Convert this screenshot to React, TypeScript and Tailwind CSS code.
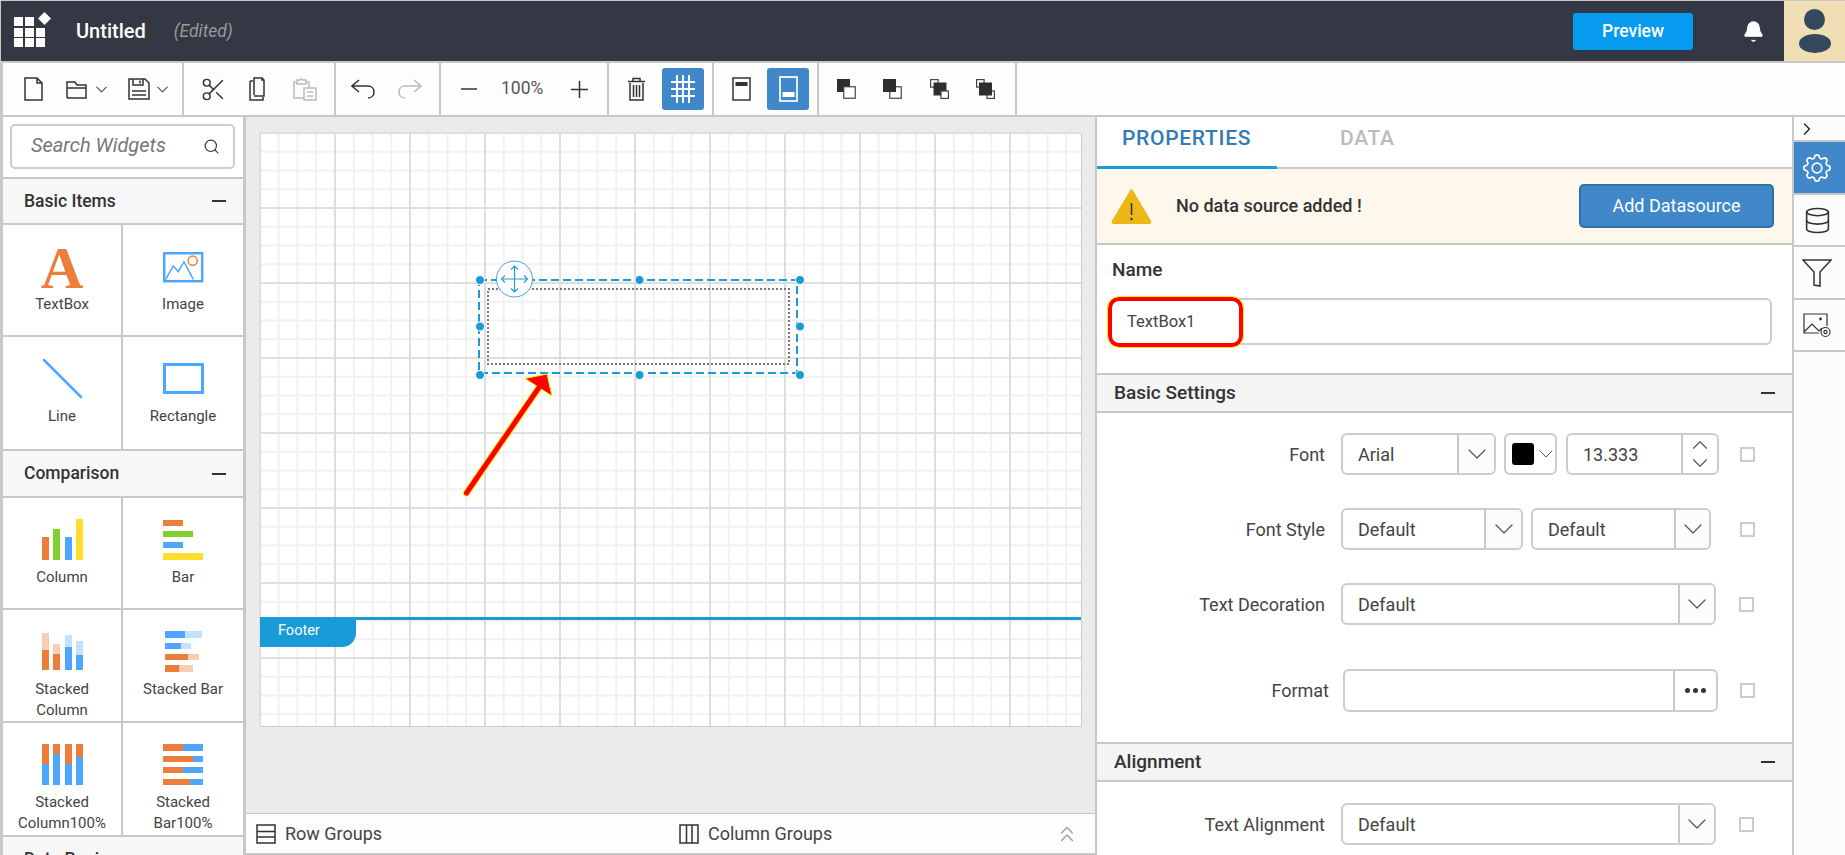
import { ReactNode } from "react"
import { Bell, ChevronDown, ChevronRight, ChevronUp, ChevronsUp, Database, Search, Scissors } from "lucide-react"
import { BsGear } from "react-icons/bs"

const ORANGE = "#ed7d3b"
const BLUE = "#4da6ff"
const LIGHT_ORANGE = "#f9cdb4"
const LIGHT_BLUE = "#c3e0ff"
const GREEN = "#7ed02c"
const YELLOW = "#ffdd2e"

const Bars = ({ items }: { items: [number, number, number, number, string][] }) => (
    <svg width="60" height="46" viewBox="0 0 60 46">
        {items.map(([x, y, w, h, fill], i) => <rect key={i} x={x} y={y} width={w} height={h} fill={fill} />)}
    </svg>
)

const stackedColumn = (x: number, top: number, mid: number, light: string, dark: string): [number, number, number, number, string][] => [
    [x, top, 7, mid - top, light],
    [x, mid, 7, 40 - mid, dark],
]

const stackedBar = (y: number, h: number, split: number, end: number, dark: string, light: string): [number, number, number, number, string][] => [
    [12, y, split - 12, h, dark],
    [split, y, end - split, h, light],
]

const column100 = (x: number, split: number): [number, number, number, number, string][] => [
    [x, 1, 7, split - 1, ORANGE],
    [x, split, 7, 42 - split, BLUE],
]

const bar100 = (y: number, h: number, split: number): [number, number, number, number, string][] => [
    [10, y, split - 10, h, ORANGE],
    [split, y, 50 - split, h, BLUE],
]

const basicItems: { label: ReactNode, icon: ReactNode }[] = [
    { label: "TextBox", icon: <span className="font-['Liberation_Serif',serif] font-bold text-[59px] leading-[46px] text-[#ed7d3b]">A</span> },
    {
        label: "Image", icon: <svg width="60" height="46" viewBox="0 0 60 46" fill="none">
            <rect x="11.2" y="8.2" width="38" height="28" stroke={BLUE} strokeWidth="2.5" />
            <path d="M12.7 34.3L20.3 21L25.3 26.7L31 16.7L40.3 34.3" stroke={BLUE} strokeWidth="1.5" />
            <circle cx="39.7" cy="15.7" r="4.6" stroke={ORANGE} strokeWidth="1.5" fill="#fff" />
        </svg>
    },
    {
        label: "Line", icon: <svg width="60" height="46" viewBox="0 0 60 46" fill="none">
            <path d="M12 3L49 40" stroke={BLUE} strokeWidth="2.5" strokeLinecap="round" />
        </svg>
    },
    {
        label: "Rectangle", icon: <svg width="60" height="46" viewBox="0 0 60 46" fill="none">
            <rect x="11.5" y="7.5" width="38" height="28" stroke={BLUE} strokeWidth="3" />
        </svg>
    },
]

const comparison: { label: ReactNode, icon: ReactNode }[] = [
    { label: "Column", icon: <Bars items={[[10, 19, 7, 23, ORANGE], [21, 11, 7, 31, GREEN], [33, 19, 7, 23, BLUE], [44, 1, 7, 41, YELLOW]]} /> },
    { label: "Bar", icon: <Bars items={[[10, 2, 20, 6, ORANGE], [10, 13, 30, 6, GREEN], [10, 24, 20, 6, BLUE], [10, 35, 40, 7, YELLOW]]} /> },
    {
        label: <>Stacked<br />Column</>, icon: <Bars items={[
            ...stackedColumn(10, 3, 20, LIGHT_ORANGE, ORANGE),
            ...stackedColumn(21, 14, 24, LIGHT_ORANGE, ORANGE),
            ...stackedColumn(33, 5, 17, LIGHT_BLUE, BLUE),
            ...stackedColumn(44, 11, 25, LIGHT_BLUE, BLUE),
        ]} />
    },
    {
        label: "Stacked Bar", icon: <Bars items={[
            ...stackedBar(1, 7, 32, 49, BLUE, LIGHT_BLUE),
            ...stackedBar(13, 6, 28, 38, BLUE, LIGHT_BLUE),
            ...stackedBar(24, 6, 35, 46, ORANGE, LIGHT_ORANGE),
            ...stackedBar(35, 7, 26, 40, ORANGE, LIGHT_ORANGE),
        ]} />
    },
    {
        label: <>Stacked<br />Column100%</>, icon: <Bars items={[
            ...column100(10, 21), ...column100(21, 11), ...column100(33, 21), ...column100(44, 14),
        ]} />
    },
    {
        label: <>Stacked<br />Bar100%</>, icon: <Bars items={[
            ...bar100(1, 7, 30), ...bar100(13, 6, 40), ...bar100(24, 6, 30), ...bar100(36, 6, 37),
        ]} />
    },
]

const Minus = () => <div className="w-[14px] h-[2px] bg-[#333]"></div>

const Widget = ({ label, icon, left, rule, h }: { label: ReactNode, icon: ReactNode, left: boolean, rule: boolean, h: string }) => (
    <div className={`${h} ${left ? "w-[120px] border-r-2" : "w-[120px]"} ${rule ? "border-b-2" : ""} border-[#c8c8c8] flex flex-col items-center pt-[20px]`}>
        <div className="h-[46px] flex items-center justify-center">{icon}</div>
        <div className="mt-[3px] text-[15px] leading-[21px] text-[#444] text-center whitespace-nowrap">{label}</div>
    </div>
)

const LeftHeader = ({ title, h }: { title: string, h: string }) => (
    <div className={`${h} shrink-0 border-y-2 border-[#c8c8c8] bg-[#f7f7f7] flex items-center justify-between pl-[21px] pr-[17px] text-[17.5px] font-medium text-[#333]`}>
        {title}
        <Minus />
    </div>
)

const LeftPanel = () => (
    <div className="w-[243px] ml-[3px] shrink-0 h-full bg-white border-r-[3px] border-[#c8c8c8] overflow-hidden">
        <div className="h-[60px] pt-[7px] pl-[7px]">
            <div className="w-[225px] h-[45px] border-2 border-[#ccc] rounded-[5px] flex items-center justify-between pl-[19px] pr-[13px]">
                <span className="italic text-[20px] leading-[24px] -mt-[3px] text-[#777]">Search Widgets</span>
                <Search size={17} color="#333" strokeWidth={1.6} />
            </div>
        </div>
        <LeftHeader title="Basic Items" h="h-[48px]" />
        <div className="flex flex-wrap">
            <Widget {...basicItems[0]} left rule h="h-[112px]" />
            <Widget {...basicItems[1]} left={false} rule h="h-[112px]" />
            <Widget {...basicItems[2]} left rule={false} h="h-[112px]" />
            <Widget {...basicItems[3]} left={false} rule={false} h="h-[112px]" />
        </div>
        <LeftHeader title="Comparison" h="h-[49px]" />
        <div className="flex flex-wrap">
            <Widget {...comparison[0]} left rule h="h-[112px]" />
            <Widget {...comparison[1]} left={false} rule h="h-[112px]" />
            <Widget {...comparison[2]} left rule h="h-[113px]" />
            <Widget {...comparison[3]} left={false} rule h="h-[113px]" />
            <Widget {...comparison[4]} left rule={false} h="h-[112px]" />
            <Widget {...comparison[5]} left={false} rule={false} h="h-[112px]" />
        </div>
        <LeftHeader title="Data Regions" h="h-[48px]" />
    </div>
)

const Icon = ({ w, h, ml, children, stroke = "#333" }: { w: number, h: number, ml: string, children: ReactNode, stroke?: string }) => (
    <svg className={`${ml} shrink-0`} width={w} height={h} viewBox={`0 0 ${w} ${h}`} fill="none" stroke={stroke} strokeWidth="1.5">{children}</svg>
)

const Chevron = ({ ml }: { ml: string }) => (
    <Icon w={11} h={7} ml={ml}><path d="M0.5 0.8L5.5 6L10.5 0.8" strokeWidth="1.1" stroke="#555" /></Icon>
)

const Overlap = ({ ml, kind }: { ml: string, kind: number }) => (
    <Icon w={19} h={20} ml={ml} stroke="#444">
        {kind === 0 && <><rect x="0" y="0" width="13" height="13" fill="#2e2e2e" stroke="none" /><rect x="6.75" y="7.75" width="11.5" height="11.5" fill="#fff" strokeWidth="1.2" /></>}
        {kind === 1 && <><rect x="6.75" y="7.75" width="11.5" height="11.5" fill="#fff" strokeWidth="1.2" /><rect x="0" y="0" width="13" height="13" fill="#2e2e2e" stroke="none" /></>}
        {kind === 2 && <><rect x="0.6" y="0.6" width="7.5" height="7.5" fill="#fff" strokeWidth="1.2" /><rect x="3.5" y="3.5" width="13" height="13" fill="#2e2e2e" stroke="none" /><rect x="11" y="12" width="7.4" height="7.4" fill="#fff" strokeWidth="1.2" /></>}
        {kind === 3 && <><rect x="0.6" y="0.6" width="7.5" height="7.5" fill="#fff" strokeWidth="1.2" /><rect x="11" y="12" width="7.4" height="7.4" fill="#fff" strokeWidth="1.2" /><rect x="3" y="3.5" width="13" height="13" fill="#2e2e2e" stroke="none" /></>}
    </Icon>
)

const Group = ({ w, children }: { w: string, children: ReactNode }) => (
    <div className={`${w} shrink-0 h-full border-r-2 border-[#c8c8c8] flex items-center`}>{children}</div>
)

const Toolbar = () => (
    <div className="h-[52px] ml-[3px] shrink-0 bg-[#fdfdfd] flex">
        <Group w="w-[181px]">
            <Icon w={19} h={24} ml="ml-[21px]"><path d="M1 1H13L18 6V23H1Z M13 1V6H18" /></Icon>
            <Icon w={24} h={20} ml="ml-[23px]"><path d="M1 19V3H9L11 6H20V9 M1 19H20V9H1" /></Icon>
            <Chevron ml="ml-[6px]" />
            <Icon w={22} h={22} ml="ml-[21px]"><path d="M1 1H17L21 5V21H1Z M5 1V7H15V1 M12 2.5V5.5 M4 13H18 M4 17H18" /></Icon>
            <Chevron ml="ml-[7px]" />
        </Group>
        <Group w="w-[152px]">
            <Scissors className="ml-[16px] shrink-0" size={27} color="#333" strokeWidth={1.3} />
            <Icon w={19} h={24} ml="ml-[22px]"><path d="M5 18V1H13L15 3V19H5 M1 4H4 M1 4V23H14V20 M13 1V3H15" /></Icon>
            <Icon w={24} h={23} ml="ml-[25px]" stroke="#bbb"><path d="M4 4H1V20H11 M13 4H16V10 M4 2H7Q8.5-.5 10 2H13V6H4Z M11 10H23V22H11Z M14 14H20 M14 18H20" /></Icon>
        </Group>
        <Group w="w-[105px]">
            <Icon w={25} h={20} ml="ml-[15px]"><path d="M8 1L1 7L8 13 M1 7H17C25 7 25 19 17 19" /></Icon>
            <Icon w={24} h={20} ml="ml-[22px]" stroke="#bbb"><path d="M16 1L23 7L16 13 M23 7H7C-1 7-1 19 7 19" /></Icon>
        </Group>
        <Group w="w-[168px]">
            <Icon w={16} h={2} ml="ml-[20px]"><path d="M0 1H16" /></Icon>
            <span className="ml-[24px] w-[44px] text-[17.5px] text-[#555] whitespace-nowrap -mt-[2px]">100%</span>
            <Icon w={17} h={17} ml="ml-[26px]"><path d="M0 8.5H17 M8.5 0V17" /></Icon>
        </Group>
        <Group w="w-[105px]">
            <Icon w={19} h={24} ml="ml-[18px]"><path d="M3 6V23H16V6 M1 4.5H18 M6 4V1.5H13V4 M6.5 8V20 M9.5 8V20 M12.5 8V20" /></Icon>
            <div className="ml-[16px] w-[42px] h-[42px] rounded-[3px] bg-[#4088c9] flex items-center justify-center">
                <Icon w={24} h={28} ml="" stroke="#fff"><path d="M6 0V28 M12 0V28 M18 0V28 M0 7H24 M0 14H24 M0 21H24" strokeWidth="2" /></Icon>
            </div>
        </Group>
        <Group w="w-[105px]">
            <Icon w={19} h={24} ml="ml-[18px]"><rect x="1" y="1" width="17" height="22" /><rect x="3.5" y="5" width="12" height="4" fill="#333" stroke="none" /></Icon>
            <div className="ml-[16px] w-[42px] h-[42px] rounded-[3px] bg-[#4088c9] flex items-center justify-center">
                <Icon w={19} h={26} ml="" stroke="#fff"><rect x="1" y="1" width="17" height="24" strokeWidth="1.7" /><rect x="3.5" y="16" width="12" height="5" fill="#fff" stroke="none" /></Icon>
            </div>
        </Group>
        <Group w="w-[198px]">
            <Overlap ml="ml-[18px]" kind={0} />
            <Overlap ml="ml-[27px]" kind={1} />
            <Overlap ml="ml-[28px]" kind={2} />
            <Overlap ml="ml-[27px]" kind={3} />
        </Group>
        <div className="flex-1"></div>
    </div>
)

const Selection = () => (
    <svg className="absolute left-px top-0 overflow-visible" width="821" height="594" viewBox="0 0 821 594" fill="none">
        <rect x="219" y="148" width="318" height="93" stroke="#1a9ad6" strokeWidth="2" strokeDasharray="8 4" />
        <rect x="228" y="157" width="301" height="75" stroke="#777" strokeWidth="2" strokeDasharray="2 2" />
        {[[220, 148], [379.5, 148], [540, 148], [220, 194.5], [540, 194.5], [220, 243], [379.5, 243], [540, 243]].map(([cx, cy]) => (
            <circle key={`${cx}-${cy}`} cx={cx} cy={cy} r="4.5" fill="#1a9ad6" stroke="#fff" strokeWidth="1" />
        ))}
        <circle cx="254.5" cy="147" r="18" fill="#fff" stroke="#4aa3e0" strokeWidth="1" />
        <path d="M254.5 134V160 M241.5 147H267.5 M251 137.5L254.5 134L258 137.5 M251 156.5L254.5 160L258 156.5 M245 143.5L241.5 147L245 150.5 M264 143.5L267.5 147L264 150.5" stroke="#2b9bd8" strokeWidth="1.2" />
        <path d="M206.5 361L280 254" stroke="#ffef00" strokeWidth="7" strokeLinecap="round" />
        <path d="M265 246.5L287 242L292 264Z" fill="#f00" stroke="#ffef00" strokeWidth="1" />
        <path d="M206.5 361L280 254" stroke="#f00" strokeWidth="5" strokeLinecap="round" />
    </svg>
)

const Canvas = () => (
    <div className="relative ml-[13px] mt-[15px] w-[822px] h-[594px] bg-white shadow-[1px_1px_0_0_#ccc] bg-[linear-gradient(to_right,#dedede_2px,transparent_2px),linear-gradient(to_bottom,#dedede_2px,transparent_2px),linear-gradient(to_right,#f1f1f1_2px,transparent_2px),linear-gradient(to_bottom,#f1f1f1_2px,transparent_2px)] bg-size-[75px_75px,75px_75px,18.75px_18.75px,18.75px_18.75px]">
        <div className="absolute left-px right-0 top-[485px] h-[3px] bg-[#1a9ad6]"></div>
        <div className="absolute left-px top-[485px] w-[96px] h-[30px] bg-[#1a9ad6] rounded-br-[14px] pl-[18px] text-[14.5px] leading-[28px] text-white">Footer</div>
        <Selection />
    </div>
)

const BottomBar = () => (
    <div className="h-[42px] shrink-0 bg-[#fdfdfd] border-t border-b-2 border-[#c8c8c8] flex items-center text-[18px] text-[#444]">
        <Icon w={20} h={20} ml="ml-[10px]"><path d="M1 1H19V19H1Z M1 7.5H19 M1 13H19" /></Icon>
        <span className="ml-[9px] w-[394px]">Row Groups</span>
        <Icon w={20} h={20} ml=""><path d="M1 1H19V19H1Z M7.5 1V19 M13 1V19" /></Icon>
        <span className="ml-[9px]">Column Groups</span>
        <ChevronsUp className="ml-auto mr-[15px]" size={26} color="#999" strokeWidth={1.2} />
    </div>
)

const Caret = ({ w }: { w: string }) => (
    <div className={`${w} h-full shrink-0 border-l-2 border-[#c8c8c8] bg-[#fcfcfc] flex items-center justify-center rounded-r-[4px]`}>
        <ChevronDown size={32} color="#555" strokeWidth={0.9} />
    </div>
)

const Select = ({ w, caret, text = "Default", ml = "" }: { w: string, caret: string, text?: string, ml?: string }) => (
    <div className={`${w} ${ml} h-[42px] shrink-0 bg-white border-2 border-[#ccc] rounded-[6px] flex items-center justify-between text-[18px] text-[#444]`}>
        <span className="pl-[15px]">{text}</span>
        <Caret w={caret} />
    </div>
)

const Check = ({ ml }: { ml: string }) => <div className={`${ml} w-[15px] h-[15px] shrink-0 border-2 border-[#ccc]`}></div>

const Label = ({ children, w = "w-[228px]" }: { children: ReactNode, w?: string }) => (
    <div className={`${w} shrink-0 text-right text-[18px] text-[#444] whitespace-nowrap`}>{children}</div>
)

const PanelHeader = ({ title }: { title: string }) => (
    <div className="h-[40px] shrink-0 border-y-2 border-[#c8c8c8] bg-[#f4f4f4] flex items-center justify-between pl-[17px] pr-[17px] text-[19px] font-medium text-[#333]">
        {title}
        <Minus />
    </div>
)

const PropertiesPanel = () => (
    <div className="relative w-[695px] h-full ml-px shrink-0 bg-white flex flex-col overflow-hidden">
        <div className="h-[52px] shrink-0 border-b-2 border-[#c8c8c8] flex text-[21px] font-medium tracking-[0.7px]">
            <div className="w-[180px] h-[52px] border-b-[3px] border-[#1a9ad6] pl-[25px] leading-[42px] text-[#337ab7]">PROPERTIES</div>
            <div className="ml-[63px] leading-[42px] text-[#bbb]">DATA</div>
        </div>
        <div className="h-[76px] shrink-0 border-b-2 border-[#c8c8c8] bg-[#fef7ec] flex items-center">
            <svg className="ml-[14px] shrink-0" width="41" height="37" viewBox="0 0 41 37">
                <path d="M20.5 2L39 33Q40 35 38 35H3Q1 35 2 33Z" fill="#ecb717" stroke="#ecb717" strokeWidth="2" strokeLinejoin="round" />
                <path d="M20.5 15V27" stroke="#333" strokeWidth="1.5" />
                <circle cx="20.5" cy="31" r="1.2" fill="#333" />
            </svg>
            <span className="ml-[24px] -mt-[1px] text-[18px] font-medium text-[#333]">No data source added !</span>
            <div className="ml-auto mr-[18px] w-[195px] h-[44px] rounded-[5px] border-2 border-[#2f6fa8] bg-[#4088c9] flex items-center justify-center pb-[1px] text-[18px] text-white">Add Datasource</div>
        </div>
        <div className="h-[128px] shrink-0">
            <div className="pl-[15px] pt-[14px] text-[19px] leading-[22px] font-medium text-[#333]">Name</div>
            <div className="relative ml-[13px] mt-[17px] w-[662px] h-[47px] border-2 border-[#ccc] rounded-[6px] flex items-center pl-[15px] pt-[1px] text-[16.5px] text-[#444]">
                TextBox1
                <div className="absolute -left-[4px] -top-[3px] w-[135px] h-[50px] rounded-[11px] border-[4px] border-[#f00] outline-1 outline-[#ffef00]"></div>
            </div>
        </div>
        <PanelHeader title="Basic Settings" />
        <div className="flex items-center mt-[20px]">
            <Label>Font</Label>
            <div className="ml-[16px] w-[155px] h-[42px] border-2 border-[#ccc] rounded-[6px] flex items-center justify-between text-[18px] text-[#444]">
                <span className="pl-[15px]">Arial</span>
                <Caret w="w-[37px]" />
            </div>
            <div className="ml-[8px] w-[53px] h-[42px] border-2 border-[#ccc] rounded-[6px] flex items-center pl-[6px]">
                <div className="w-[22px] h-[22px] bg-black rounded-[3px]"></div>
                <ChevronDown className="-mr-[4px]" size={24} color="#555" strokeWidth={1} />
            </div>
            <div className="ml-[9px] w-[153px] h-[42px] border-2 border-[#ccc] rounded-[6px] flex items-center justify-between text-[18px] text-[#444]">
                <span className="pl-[15px]">13.333</span>
                <div className="w-[36px] h-full border-l-2 border-[#c8c8c8] flex flex-col items-center justify-center">
                    <ChevronUp className="-my-[4px]" size={26} color="#555" strokeWidth={1} />
                    <ChevronDown className="-my-[4px]" size={26} color="#555" strokeWidth={1} />
                </div>
            </div>
            <Check ml="ml-[21px]" />
        </div>
        <div className="flex items-center mt-[33px]">
            <Label>Font Style</Label>
            <Select ml="ml-[16px]" w="w-[182px]" caret="w-[37px]" />
            <Select ml="ml-[8px]" w="w-[180px]" caret="w-[35px]" />
            <Check ml="ml-[29px]" />
        </div>
        <div className="flex items-center mt-[33px]">
            <Label>Text Decoration</Label>
            <Select ml="ml-[16px]" w="w-[375px]" caret="w-[36px]" />
            <Check ml="ml-[23px]" />
        </div>
        <div className="flex items-center mt-[44px]">
            <Label w="w-[232px]">Format</Label>
            <div className="ml-[14px] w-[375px] h-[43px] border-2 border-[#ccc] rounded-[6px] flex justify-end">
                <div className="w-[43px] h-full border-l-2 border-[#c8c8c8] flex items-center justify-center gap-[3px]">
                    <div className="w-[5px] h-[5px] rounded-full bg-[#333]"></div>
                    <div className="w-[5px] h-[5px] rounded-full bg-[#333]"></div>
                    <div className="w-[5px] h-[5px] rounded-full bg-[#333]"></div>
                </div>
            </div>
            <Check ml="ml-[22px]" />
        </div>
        <div className="mt-[30px]"><PanelHeader title="Alignment" /></div>
        <div className="flex items-center mt-[21px]">
            <Label>Text Alignment</Label>
            <Select ml="ml-[16px]" w="w-[375px]" caret="w-[36px]" />
            <Check ml="ml-[23px]" />
        </div>
    </div>
)

const StripCell = ({ h, active, children }: { h: string, active?: boolean, children?: ReactNode }) => (
    <div className={`${h} shrink-0 border-b-2 border-[#c8c8c8] flex items-center justify-center pr-[5px] ${active ? "bg-[#4088c9]" : ""}`}>{children}</div>
)

const RightStrip = () => (
    <div className="flex-1 h-full border-l-2 border-[#c8c8c8] bg-[#fcfcfc] flex flex-col">
        <div className="h-[25px] shrink-0 border-b-2 border-[#c8c8c8] pl-[3px] flex items-center">
            <ChevronRight size={20} color="#222" strokeWidth={1.6} />
        </div>
        <StripCell h="h-[53px]" active><BsGear size={28} color="#fff" /></StripCell>
        <StripCell h="h-[52px]"><Database size={29} color="#333" strokeWidth={1.3} /></StripCell>
        <StripCell h="h-[53px]">
            <svg width="30" height="28" viewBox="0 0 30 28" fill="none" stroke="#333" strokeWidth="1.5"><path d="M1 1H29L18 13V27L12 26V13Z" /></svg>
        </StripCell>
        <StripCell h="h-[52px]">
            <svg width="28" height="25" viewBox="0 0 28 25" fill="none" stroke="#333" strokeWidth="1.2">
                <path d="M16 20H1V1H24V13 M1 19L9 11L16 18L19 15" />
                <circle cx="17.5" cy="6" r="1.4" fill="#333" stroke="none" />
                <circle cx="22.5" cy="19" r="4.5" />
                <circle cx="22.5" cy="19" r="1.6" />
            </svg>
        </StripCell>
    </div>
)

const Header = () => (
    <div className="h-[60px] ml-px shrink-0 bg-[#343844] flex items-center">
        <svg className="ml-[12px] shrink-0" width="40" height="38" viewBox="0 0 40 38" fill="#fff">
            {[[1, 5], [12, 5], [1, 16], [12, 16], [23, 16], [1, 26], [12, 26], [23, 26]].map(([x, y]) => <rect key={`${x}-${y}`} x={x} y={y} width="9" height="9" />)}
            <path d="M31.5 0L38 6.5L31.5 13L25 6.5Z" />
        </svg>
        <span className="ml-[23px] text-[20px] text-white font-medium">Untitled</span>
        <span className="ml-[28px] text-[17.5px] italic text-[#999]">(Edited)</span>
        <div className="ml-auto w-[120px] h-[37px] rounded-[3px] bg-[#069bee] flex items-center justify-center text-[17.5px] font-medium text-white">Preview</div>
        <Bell className="ml-[49px]" size={23} color="#fff" fill="#fff" strokeWidth={1.2} />
        <div className="ml-[19px] w-[61px] h-full bg-[#f0deb4] flex flex-col items-center">
            <div className="mt-[8px] w-[21px] h-[21px] rounded-full bg-[#34495e]"></div>
            <div className="mt-[4px] w-[32px] h-[19px] rounded-[50%] bg-[#34495e]"></div>
        </div>
    </div>
)

export default function App() {
    return (
        <div className="w-[1845px] h-[855px] overflow-hidden bg-[#c8c8c8] pt-px flex flex-col gap-[2px] font-['Roboto',sans-serif]">
            <Header />
            <Toolbar />
            <div className="flex h-[738px]">
                <LeftPanel />
                <div className="w-[850px] h-full shrink-0 bg-[#ebebeb] flex flex-col border-r border-[#c8c8c8]">
                    <div className="flex-1"><Canvas /></div>
                    <BottomBar />
                </div>
                <PropertiesPanel />
                <RightStrip />
            </div>
        </div>
    )
}
